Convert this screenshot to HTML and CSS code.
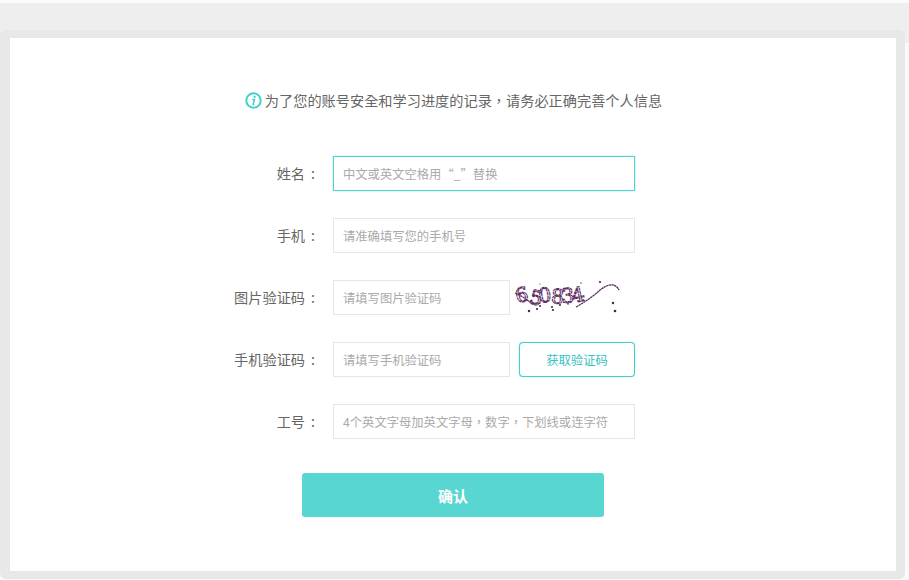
FILE: index.html
```html
<!DOCTYPE html>
<html lang="zh-CN">
<head>
    <meta charset="UTF-8">
    <title>完善个人信息</title>
    <link rel="stylesheet" href="styles.css">
</head>
<body>
    <div class="page">
        <div class="shell">
            <div class="card">
                <p class="notice" lang="zh-TW">
                    <svg class="notice-icon" width="17" height="17" viewBox="0 0 17 17">
                        <circle cx="8.5" cy="8.5" r="7.2" fill="none" stroke="#3fd0ca" stroke-width="2"/>
                        <circle cx="9.7" cy="4.8" r="1.1" fill="#3fd0ca"/>
                        <path d="M7.2 7.5h2.3l-1.3 4.5q-.1.7 1 .3" fill="none" stroke="#3fd0ca" stroke-width="1.5"/>
                    </svg>
                    <span>为了您的账号安全和学习进度的记录，请务必正确完善个人信息</span>
                </p>

                <form class="info-form">
                    <div class="form-row">
                        <label class="form-label">姓名<span class="colon">:</span></label>
                        <input type="text" class="form-input is-focus" placeholder="中文或英文空格用“_”替换">
                    </div>
                    <div class="form-row">
                        <label class="form-label">手机<span class="colon">:</span></label>
                        <input type="text" class="form-input" placeholder="请准确填写您的手机号">
                    </div>
                    <div class="form-row">
                        <label class="form-label">图片验证码<span class="colon">:</span></label>
                        <input type="text" class="form-input short" placeholder="请填写图片验证码">
                        <svg class="captcha" width="106" height="36" viewBox="0 0 106 36">
                            <text class="captcha-text" x="3" y="24" rotate="-12 14 -8 4 -4 -12">650834</text>
                            <path d="M1 14q7 3 12 7t14 3M62 28q14-8 23-16q8-7 14-6q4 1 6 5" fill="none" stroke="#5c2a63" stroke-width="1.3" stroke-dasharray="2.4 .4"/>
                            <g fill="#4d1f52">
                                <circle cx="15" cy="32" r="1.2"/><circle cx="23" cy="30" r="1.1"/><circle cx="26" cy="27" r="1"/>
                                <circle cx="38" cy="28" r="1"/><circle cx="39" cy="31" r="1.1"/><circle cx="46" cy="26" r="1"/>
                                <circle cx="86" cy="3" r="1.1"/><circle cx="99" cy="24" r="1.2"/><circle cx="101" cy="32" r="1.3"/>
                                <circle cx="67" cy="4" r=".7"/><circle cx="26" cy="5" r=".6"/><circle cx="54" cy="25" r=".8"/>
                            </g>
                        </svg>
                    </div>
                    <div class="form-row">
                        <label class="form-label">手机验证码<span class="colon">:</span></label>
                        <input type="text" class="form-input short" placeholder="请填写手机验证码">
                        <button type="button" class="code-btn">获取验证码</button>
                    </div>
                    <div class="form-row">
                        <label class="form-label">工号<span class="colon">:</span></label>
                        <input type="text" class="form-input comma-center" lang="zh-TW" placeholder="4个英文字母加英文字母，数字，下划线或连字符">
                    </div>
                    <button type="button" class="submit-btn">确认</button>
                </form>
            </div>
        </div>
    </div>
</body>
</html>
```

FILE: styles.css
```css
* {
    margin: 0;
    padding: 0;
    box-sizing: border-box;
    font-family: "Noto Sans CJK SC", "Liberation Sans", sans-serif;
}

html, body {
    height: 580px;
    overflow: hidden;
    background-color: #fafafa;
}

.page {
    margin-top: 3px;
    padding: 27px 4px 0 0;
    height: 576px;
    background: linear-gradient(#eeeeee 40px, #fafafa 40px);
}

.shell {
    background-color: #e8e8e8;
    border-radius: 6px;
    padding: 8px 9px 8px 10px;
}

.card {
    background-color: #fff;
    height: 533px;
    padding-top: 52px;
}

.notice {
    display: flex;
    justify-content: center;
    align-items: center;
    gap: 3px;
    height: 20px;
    font-size: 14.2px;
    color: #666;
    margin-left: 1px;
}

.notice span {
    font-family: "Noto Sans CJK TC", sans-serif;
}

.info-form {
    margin-top: 46px;
}

.form-row {
    display: flex;
    align-items: center;
    height: 35px;
    margin-bottom: 27px;
}

.form-label {
    width: 323px;
    padding: 0 18px 2px 0;
    text-align: right;
    font-size: 14.2px;
    color: #666;
}

.colon {
    margin-left: 6px;
}

.form-input {
    width: 302px;
    height: 35px;
    padding: 1px 9px 0;
    border: 1px solid #e6e6e6;
    font-size: 12.3px;
    color: #666;
    outline: none;
    background-color: #fff;
}

.form-input::placeholder {
    color: #aaa;
}

.form-input.is-focus {
    border-color: #4fd3cd;
    box-shadow: 0 0 1px #58d6d1;
}

.form-input.short {
    width: 177px;
}

.form-input.comma-center {
    font-family: "Noto Sans CJK TC", sans-serif;
}

.captcha {
    margin-left: 4px;
    margin-top: -1px;
    overflow: visible;
}

.captcha-text {
    font-family: "DejaVu Serif", serif;
    font-size: 20px;
    fill: none;
    stroke: #5c2a63;
    stroke-width: 1.1;
    stroke-dasharray: 3 .5;
    letter-spacing: -1.5px;
}

.code-btn {
    width: 116px;
    height: 35px;
    margin-left: 9px;
    background-color: #fff;
    border: 1px solid #3fd0ca;
    border-radius: 4px;
    box-shadow: 0 0 1px #58d6d1;
    color: #35c4be;
    font-size: 12.3px;
}

.submit-btn {
    display: block;
    width: 302px;
    height: 44px;
    margin: 34px 0 0 292px;
    background-color: #58d6d1;
    border: none;
    border-radius: 3px;
    color: #fff;
    font-size: 15px;
    font-weight: bold;
}
```
